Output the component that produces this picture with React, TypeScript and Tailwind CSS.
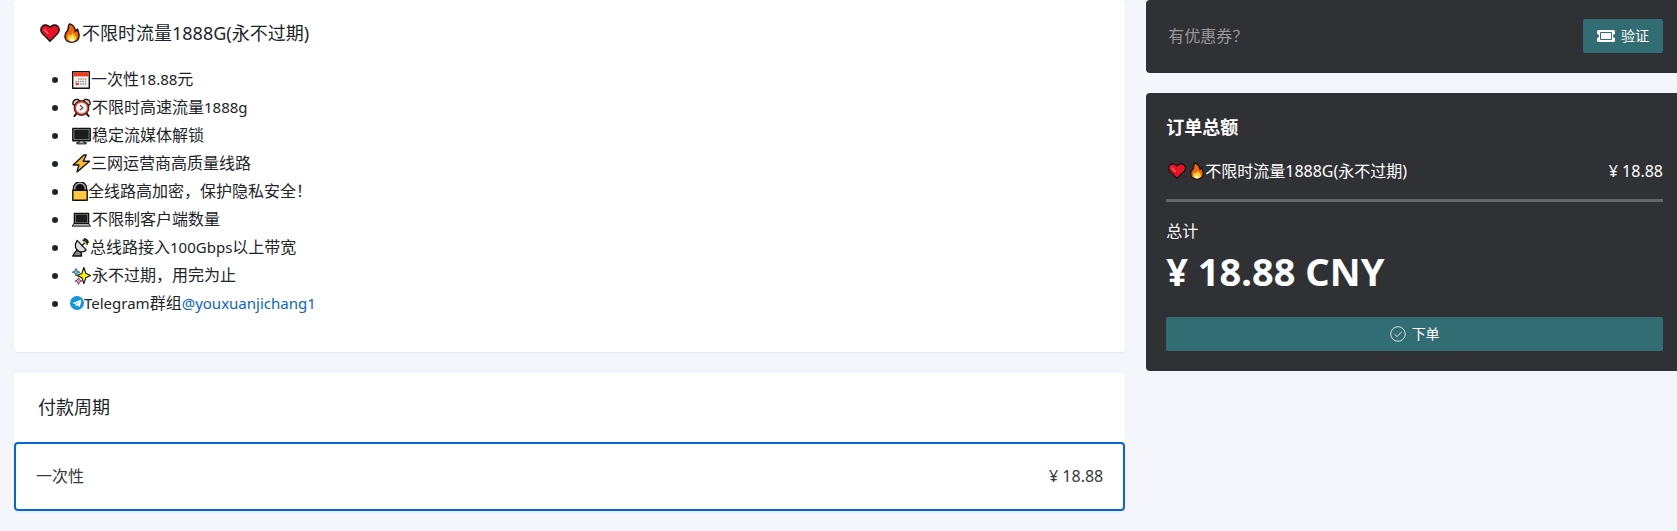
import type { ReactNode } from "react";

const ink = { stroke: "#111", strokeWidth: 1.4, strokeLinejoin: "round" as const, strokeLinecap: "round" as const };

function Glyph({ className, children, box = "0 0 20 20" }: { className: string; children: ReactNode; box?: string }) {
  return (
    <svg viewBox={box} className={`inline-block shrink-0 ${className}`} aria-hidden="true">
      {children}
    </svg>
  );
}

const Heart = ({ className }: { className: string }) => (
  <Glyph className={className}>
    <path d="M10 18.2 1.9 9.9C.3 8 .5 4.9 2.3 3.200 4.300 1.300 7.600 1.500 10 4.300c2.400-2.800 5.700-3 7.700-1.100 1.800 1.700 2 4.800.4 6.700Z" fill="#e81224" {...ink} />
    <path d="m4.600 6.600 3.200 3.600" fill="none" stroke="#f4717b" strokeWidth="1.500" strokeLinecap="round" />
  </Glyph>
);

const Fire = ({ className }: { className: string }) => (
  <Glyph className={className} box="0 0 16 20">
    <path d="M5.800.9C3.600 2.600 4.600 5 3.700 7.200 2.400 8.700.9 10.600.9 13.200c0 3.700 3 6 7 6s7.200-2.300 7.200-6.400c0-2.800-1.100-4.300-1.500-6.700-1.100.5-1.700 1.400-2 2.400C11 5.200 9.700 1.900 5.800.9Z" fill="#f7630c" {...ink} />
    <path d="M8.200 9.500c.2 2-1 2.200-1.700 3-.6-.4-.8-.9-.9-1.500-1.300 1.300-2.100 2.600-2.100 4.100 0 2.200 1.900 3.500 4.300 3.500 2.700 0 4.500-1.400 4.500-3.500 0-2.600-2.200-3.300-4.100-5.600Z" fill="#ffd02f" />
    <path d="M7.900 14.200c-1.300 1-1.900 1.800-1.900 2.700 0 1 .9 1.600 2 1.600s2-.6 2-1.600c0-.9-.8-1.700-2.100-2.700Z" fill="#fff7d6" />
  </Glyph>
);

const Calendar = () => (
  <Glyph className="ml-0.5 mr-px size-[18px] align-[-4px]" box="0 0 18 18">
    <path d="M.7.7h16.600v16.600H.7Z" fill="#f2f2f2" {...ink} />
    <path d="M1.400 1.400h15.200v4H1.400Z" fill="#f03a17" />
    <path d="M6 8h9M3.500 10.500H15M3.500 13H15" stroke="#9a9a9a" strokeWidth="1.500" strokeDasharray="1.500 .8" />
    <path d="m4 11.700 2.500 2.500m0-2.500L4 14.200" stroke="#f03a17" strokeWidth="1.100" />
  </Glyph>
);

const Clock = () => (
  <Glyph className="ml-0.5 mr-px size-[19px] align-[-4px]">
    <path d="m5 16-2.500 3M15 16l2.500 3" {...ink} strokeWidth="2" />
    <path d="M1 6.500C.5 3 3 .8 6.500 1.500L8 3 3 8ZM19 6.500c.5-3.500-2-5.700-5.500-5L12 3l5 5Z" fill="#c7c7c7" {...ink} />
    <circle cx="10" cy="10.500" r="7.800" fill="#e8391d" stroke="#111" strokeWidth="1" />
    <circle cx="10" cy="10.500" r="5.800" fill="#f5f5f5" />
    <path d="m8.600 7.500 2.700 3-3 2.200" fill="none" stroke="#444" strokeWidth="1.200" />
  </Glyph>
);

const Desktop = () => (
  <Glyph className="ml-0.5 mr-px size-[19px] align-[-4px]">
    <path d="M.8 2.500h18.400v13H.8Z" fill="#8b8b8b" {...ink} />
    <path d="M2.800 4.300h14.400v9.300H2.800Z" fill="#1d1d1d" stroke="#111" strokeWidth=".6" />
    <path d="M7.500 15.500h5v2H15v1.300H5v-1.300h2.500Z" fill="#aaa" stroke="#111" />
  </Glyph>
);

const Bolt = () => (
  <Glyph className="ml-0.5 size-[19px] align-[-4px]">
    <path d="M12.500 1 1.200 11.600h6L5.300 19 18.500 7.600h-6.700L15 1Z" fill="#fdb827" {...ink} />
  </Glyph>
);

const Lock = () => (
  <Glyph className="ml-0.5 h-[19px] w-4 align-[-4px]" box="0 0 16 19">
    <path d="M2.500 8V6.500a5.500 5.500 0 0 1 11 0V8" fill="#111" stroke="#111" strokeWidth="3.500" />
    <path d="M2.700 8V6.500a5.300 5.300 0 0 1 10.600 0V8" fill="none" stroke="#a8a8a8" strokeWidth="1.500" />
    <path d="M.8 8.300h14.400v10H.8Z" fill="#ffc83d" {...ink} />
  </Glyph>
);

const Laptop = () => (
  <Glyph className="ml-0.5 mr-px size-[19px] align-[-4px]">
    <path d="M2.500 3.500h15v10.700h-15Z" fill="#8b8b8b" {...ink} />
    <path d="M4.300 5.200h11.400v7.300H4.300Z" fill="#1d1d1d" stroke="#111" strokeWidth=".6" />
    <path d="M2.500 14.200h15l2 2.800H.5Z" fill="#b5b5b5" {...ink} strokeWidth="1" />
  </Glyph>
);

const Satellite = () => (
  <Glyph className="ml-0.5 mr-px h-[19px] w-[17px] align-[-4px]" box="0 0 18 20">
    <path d="m6 12-3.500 4-1.700 3h9.400l-1-5Z" fill="#858585" {...ink} />
    <path d="M5.500 2.500C2 7.500 3.500 12.500 7.500 14c3 1 6 .5 7.500-1.500Z" fill="#dedede" {...ink} />
    <path d="m10.500 8 3-3" {...ink} />
    <path d="M11 2.200c3 0 5 2 5.200 5M12.500.8c2.500.2 4.500 2 4.700 4.500" fill="none" stroke="#111" strokeWidth="1.500" />
    <path d="M11.500 3.500c2 .2 3 1.200 3.300 3" fill="none" stroke="#9ac21c" strokeWidth="1.300" />
  </Glyph>
);

const Sparkles = () => (
  <Glyph className="ml-0.5 mr-px size-[19px] align-[-4px]">
    <path d="M12.500 1.500 14.600 7.700 19.400 10l-4.800 2.300-2.100 6.200-2.100-6.200L5.600 10l4.800-2.300Z" fill="#fff100" {...ink} strokeWidth="1.200" />
    <path d="M4.300 2.500 5.500 5.300 8.300 6.500 5.500 7.700 4.300 10.500 3.100 7.700.3 6.500 3.100 5.300Z" fill="#4cc9ef" stroke="#111" strokeWidth=".6" />
    <path d="m6.800 12.200 1.200 2.400 2.600 1.200L8 17l-1.200 2.600L5.600 17 3 15.800l2.600-1.200Z" fill="#f08cc0" stroke="#111" strokeWidth=".6" />
  </Glyph>
);

const Telegram = () => (
  <Glyph className="size-3.5 align-[-1px]">
    <circle cx="10" cy="10" r="10" fill="#1296db" />
    <path d="M3.800 9.900 15.300 5.300c.6-.2 1 .2.900.8l-1.900 8.700c-.1.600-.6.800-1.100.4l-2.800-2.100-1.500 1.500c-.3.300-.6.200-.7-.2l-.9-3-3.400-.9c-.5-.2-.5-.5-.1-.6Z" fill="#fff" />
    <path d="m7.600 11.300 5.600-3.900-4.400 4.500-.3 2.300Z" fill="#1296db" />
  </Glyph>
);

const Ticket = () => (
  <Glyph className="h-3 w-[18px]" box="0 0 18 12">
    <path d="M1.500 0h15A1.500 1.500 0 0 1 18 1.500V4a2 2 0 0 0 0 4v2.500a1.500 1.500 0 0 1-1.500 1.500h-15A1.500 1.500 0 0 1 0 10.500V8a2 2 0 0 0 0-4V1.500A1.500 1.500 0 0 1 1.500 0Z" fill="#fff" />
    <path d="M3.500 2.500h11v7h-11Z" fill="none" stroke="#326d73" />
  </Glyph>
);

const CheckCircle = () => (
  <Glyph className="size-4" box="0 0 16 16">
    <circle cx="8" cy="8" r="7.300" fill="none" stroke="#d5e3e4" />
    <path d="m4.500 8.200 2.600 2.500 4.600-5" fill="none" stroke="#d5e3e4" />
  </Glyph>
);

const features: { icon: ReactNode; text: ReactNode }[] = [
  { icon: <Calendar />, text: <>一次性<span className="text-[15px]">18.88</span>元</> },
  { icon: <Clock />, text: <>不限时高速流量<span className="text-[15px]">1888g</span></> },
  { icon: <Desktop />, text: "稳定流媒体解锁" },
  { icon: <Bolt />, text: "三网运营商高质量线路" },
  { icon: <Lock />, text: "全线路高加密，保护隐私安全！" },
  { icon: <Laptop />, text: "不限制客户端数量" },
  { icon: <Satellite />, text: <>总线路接入<span className="text-[15px]">100Gbps</span>以上带宽</> },
  { icon: <Sparkles />, text: "永不过期，用完为止" },
  {
    icon: <Telegram />,
    text: (
      <>
        <span className="text-[15px]">Telegram</span>群组
        <a href="https://t.me/youxuanjichang1" className="text-[15px] text-[#0665d0]">@youxuanjichang1</a>
      </>
    ),
  },
];

export default function App() {
  return (
    <div className="min-h-screen overflow-x-hidden bg-[#f5f6fb] pl-3.5 font-['Noto_Sans','Noto_Sans_CJK_SC',sans-serif] text-base leading-7 text-[#212529]">
      <div className="grid grid-cols-[minmax(0,67fr)_minmax(0,32fr)] items-start gap-[21px]">
        <main className="flex flex-col gap-[21px]">
          <section className="rounded bg-white px-6 pt-[19px] pb-[35px] shadow-xs">
            <h1 className="flex items-center text-lg leading-7">
              <Heart className="ml-0.5 mr-1 size-5" />
              <Fire className="mr-0.5 h-5 w-4" />
              <span>不限时流量1888G(永不过期)</span>
            </h1>
            <ul className="mt-[18px] list-disc pl-8">
              {features.map((f, i) => (
                <li key={i} className="h-7 whitespace-nowrap">
                  {f.icon}
                  {f.text}
                </li>
              ))}
            </ul>
          </section>

          <section className="rounded bg-white shadow-xs">
            <h2 className="px-6 pt-5 pb-[21px] text-lg leading-7">付款周期</h2>
            <label className="relative flex cursor-pointer items-center justify-between rounded border-2 border-[#0665d0] px-5 py-[19px] leading-[27px] text-[#343a40]">
              <input type="radio" name="period" defaultChecked className="sr-only" />
              <span>一次性</span>
              <span>¥ 18.88</span>
            </label>
          </section>
        </main>

        <aside className="flex flex-col gap-5 text-white">
          <section className="flex items-center justify-between rounded-l bg-[#303135] pt-[19px] pr-3.5 pb-5 pl-5">
            <input
              type="text"
              aria-label="优惠券"
              placeholder="有优惠券？"
              className="h-[34px] min-w-0 flex-1 bg-transparent px-0.5 text-base outline-none placeholder:text-[#989899]"
            />
            <button type="button" className="flex h-[34px] w-20 items-center justify-center gap-1.5 rounded-xs bg-[#326d73] text-sm">
              <Ticket />
              验证
            </button>
          </section>

          <section className="rounded-l bg-[#303135] pt-5 pr-3.5 pb-5 pl-5">
            <h2 className="text-lg leading-7 font-bold">订单总额</h2>
            <div className="mt-4 flex items-center justify-between border-b-3 border-[#646669] pb-3.5">
              <span className="flex items-center">
                <Heart className="ml-0.5 mr-1 size-[18px]" />
                <Fire className="mr-px h-[18px] w-3.5" />
                <span>不限时流量1888G(永不过期)</span>
              </span>
              <span>¥ 18.88</span>
            </div>
            <div className="mt-[15px]">总计</div>
            <div className="mt-0.5 text-[38px] leading-12 font-bold">¥ 18.88 CNY</div>
            <button type="button" className="mt-[22px] flex h-[34px] w-full items-center justify-center gap-1.5 rounded-xs bg-[#326d73] text-sm">
              <CheckCircle />
              下单
            </button>
          </section>
        </aside>
      </div>
    </div>
  );
}
